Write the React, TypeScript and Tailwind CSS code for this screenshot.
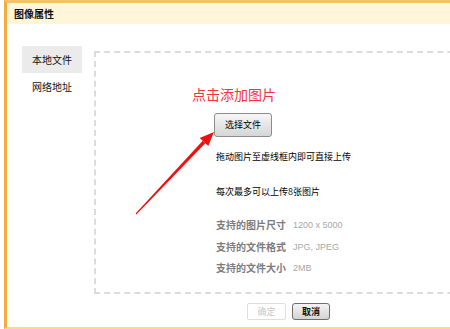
import React from "react";

const cjk = { fontFamily: '"Noto Sans CJK SC", "Liberation Sans", sans-serif' };
const latin = { fontFamily: '"Liberation Sans", Arial, sans-serif' };

function SpecRow({ label, value, mt }: { label: string; value: string; mt: string }) {
  return (
    <div className={`flex items-center h-[14px] ${mt}`}>
      <span className="text-[10px] leading-[14px] text-[#7c7c7c] font-bold w-[77px] shrink-0" style={cjk}>
        {label}
      </span>
      <span className="text-[9px] leading-[14px] text-[#a8a8a8]" style={latin}>
        {value}
      </span>
    </div>
  );
}

export default function App() {
  return (
    <div className="relative w-[450px] h-[329px] overflow-hidden bg-white">
      <div className="ml-[4px] h-[329px] border-l-[3px] border-l-[#f4ad3d] border-t-[3px] border-t-[#f3c16a] border-b-[2px] border-b-[#fdd985] flex flex-col">
        {/* header */}
        <div className="h-[21px] bg-[#fff6d9] flex items-center pl-[7px]">
          <span className="text-[10px] font-bold text-[#111] leading-none" style={cjk}>
            图像属性
          </span>
        </div>
        {/* body */}
        <div className="flex pl-[15px] pt-[22px]">
          <div className="w-[60px] shrink-0 flex flex-col">
            <div className="h-[27px] bg-[#ebebeb] flex items-center justify-center text-[10px] text-[#111]" style={cjk}>
              本地文件
            </div>
            <div className="h-[27px] flex items-center justify-center text-[10px] text-[#111]" style={cjk}>
              网络地址
            </div>
          </div>
          <div className="ml-[12px] mt-[5px] w-[420px] h-[243px] shrink-0 border-2 border-dashed border-[#dcdcdc] pl-[96px] pt-[33px] flex flex-col items-start">
            <div className="h-[16px] text-[14px] leading-[16px] text-[#f2333d]" style={cjk}>
              点击添加图片
            </div>
            <button
              className="mt-[11px] ml-[22px] h-[24px] w-[58px] rounded-[3px] border border-[#8c8c8c] bg-gradient-to-b from-[#f6f6f6] to-[#d6d6d6] text-[9px] text-[#000] flex items-center justify-center"
              style={cjk}
            >
              选择文件
            </button>
            <div className="ml-[24px] flex flex-col">
              <div className="mt-[13px] h-[14px] text-[9px] leading-[14px] text-[#000]" style={cjk}>
                拖动图片至虚线框内即可直接上传
              </div>
              <div className="mt-[21px] h-[14px] text-[9px] leading-[14px] text-[#000]" style={cjk}>
                每次最多可以上传<span className="text-[#223]">8</span>张图片
              </div>
              <SpecRow label="支持的图片尺寸" value="1200 x 5000" mt="mt-[19px]" />
              <SpecRow label="支持的文件格式" value="JPG, JPEG" mt="mt-[8px]" />
              <SpecRow label="支持的文件大小" value="2MB" mt="mt-[7px]" />
            </div>
          </div>
        </div>
        {/* footer */}
        <div className="flex pl-[240px] mt-[9px] gap-[6px]">
          <button
            className="h-[17px] w-[39px] rounded-[2px] border border-[#dedede] bg-white text-[9px] text-[#c8c8c8] flex items-center justify-center"
            style={cjk}
          >
            确定
          </button>
          <button
            className="h-[17px] w-[38px] rounded-[3px] border border-[#6f6f6f] bg-gradient-to-b from-[#f4f4f4] to-[#d4d4d4] text-[9px] font-bold text-[#111] flex items-center justify-center"
            style={cjk}
          >
            取消
          </button>
        </div>
      </div>
      {/* red arrow annotation */}
      <svg className="absolute left-0 top-0 pointer-events-none" width="450" height="329" viewBox="0 0 450 329">
        <polygon points="135.6,213.6 136.4,214.4 205.3,143.2 202.7,140.8" fill="#ee1111" />
        <polygon points="214,132 199.7,137.9 208.3,146.1" fill="#ee1111" />
      </svg>
    </div>
  );
}
